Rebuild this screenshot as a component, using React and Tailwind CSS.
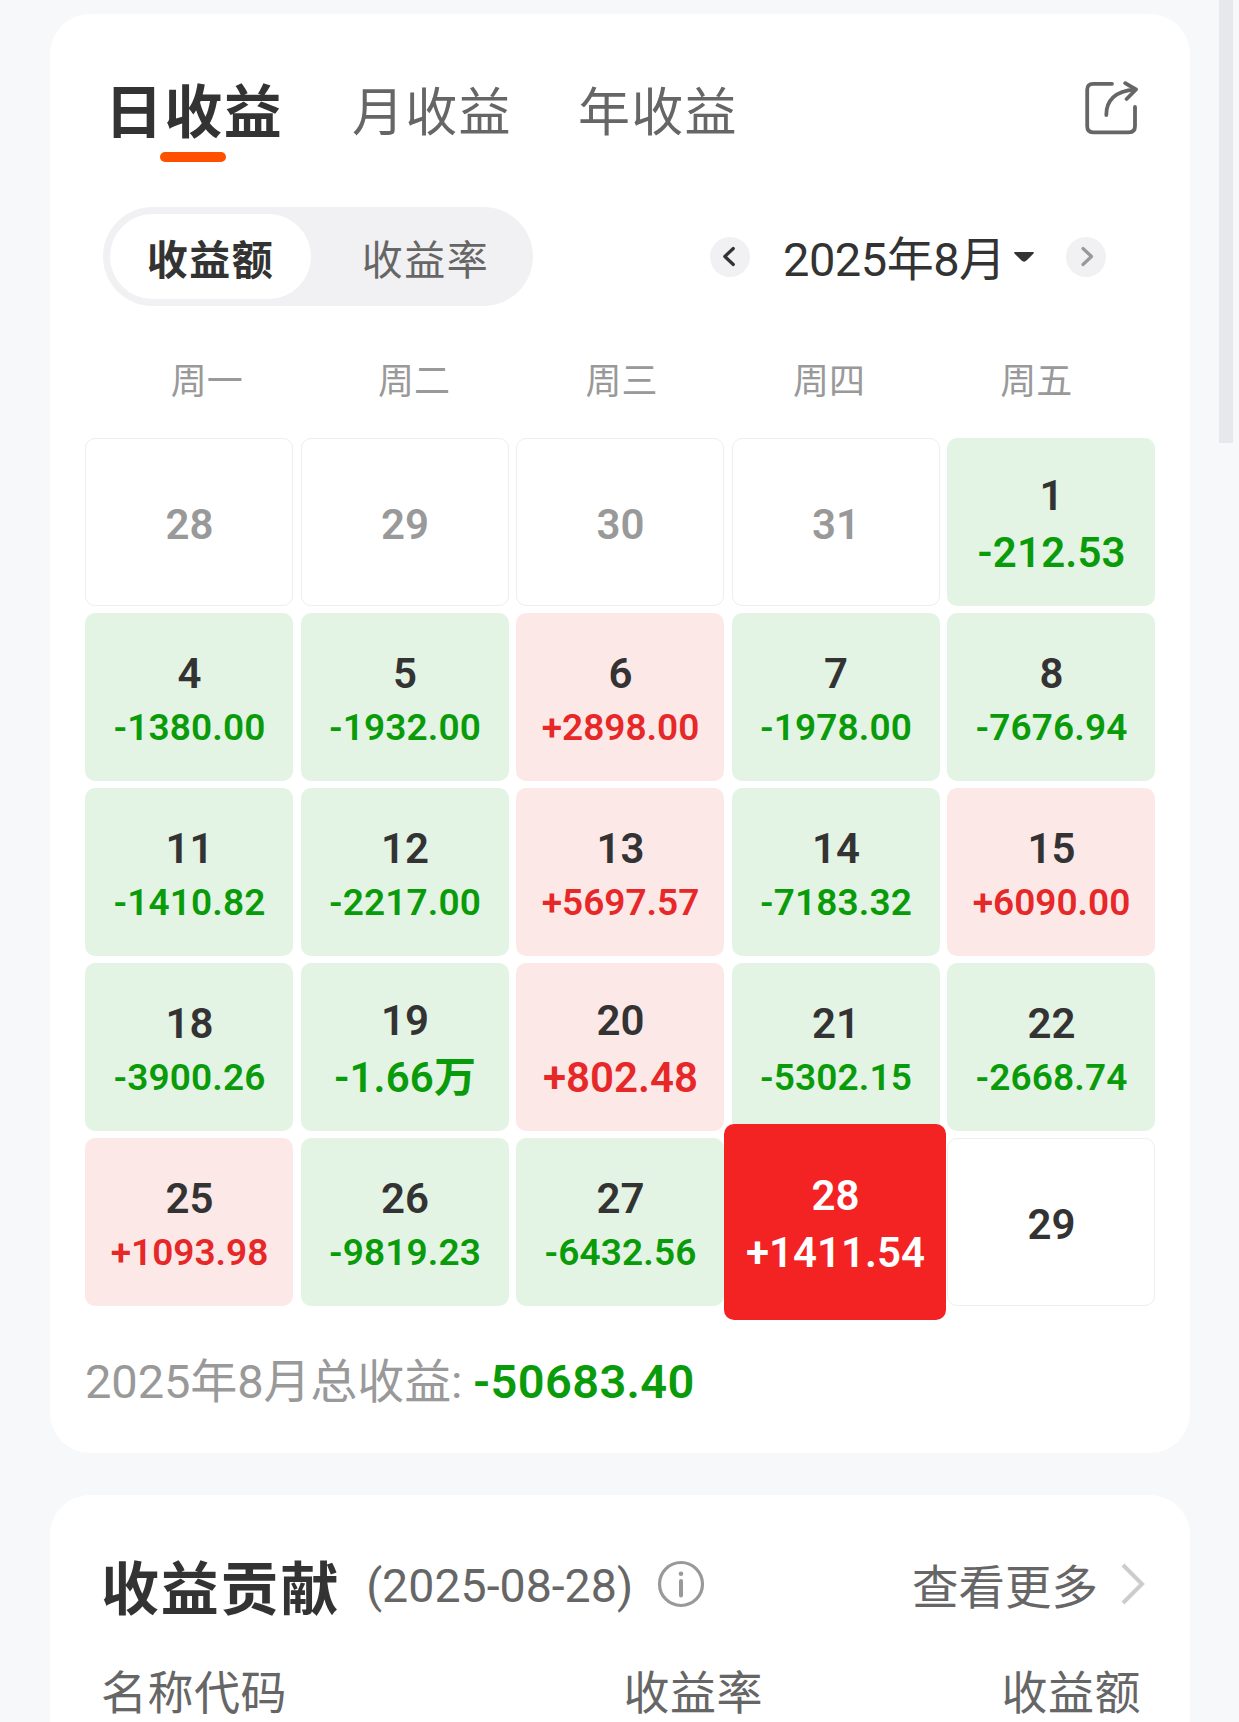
const TABS = ["月收益", "年收益"];
const WEEKDAYS = ["周一", "周二", "周三", "周四", "周五"];

const DAYS = [
  { d: 28, out: true }, { d: 29, out: true }, { d: 30, out: true }, { d: 31, out: true }, { d: 1, v: "-212.53" },
  { d: 4, v: "-1380.00" }, { d: 5, v: "-1932.00" }, { d: 6, v: "+2898.00" }, { d: 7, v: "-1978.00" }, { d: 8, v: "-7676.94" },
  { d: 11, v: "-1410.82" }, { d: 12, v: "-2217.00" }, { d: 13, v: "+5697.57" }, { d: 14, v: "-7183.32" }, { d: 15, v: "+6090.00" },
  { d: 18, v: "-3900.26" }, { d: 19, v: "-1.66万" }, { d: 20, v: "+802.48" }, { d: 21, v: "-5302.15" }, { d: 22, v: "-2668.74" },
  { d: 25, v: "+1093.98" }, { d: 26, v: "-9819.23" }, { d: 27, v: "-6432.56" }, { d: 28, v: "+1411.54", selected: true }, { d: 29 },
];

function DayCell({ day }) {
  const { d, v, out, selected } = day;
  const base = "flex h-[168px] flex-col items-center justify-center rounded-[10px] pt-1 pl-px font-semibold";
  if (!v) {
    return (
      <div className={`${base} border border-[#eeeeee] ${out ? "text-[#999999]" : "text-[#333333]"}`}>
        <span className="text-[42px] leading-[57px]">{d}</span>
      </div>
    );
  }
  if (selected) {
    return (
      <div className="z-10 -mt-[14px] -mr-[6px] -mb-[14px] -ml-[8px] flex h-[196px] flex-col items-center justify-center rounded-[10px] bg-[#f42323] pt-1 pl-0.5 font-semibold text-white">
        <span className="text-[42px] leading-[57px]">{d}</span>
        <span className="text-[42px] leading-[57px]">{v}</span>
      </div>
    );
  }
  const up = v.startsWith("+");
  const size = v.length > 7 ? "text-[37px] leading-[51px]" : "text-[42px] leading-[57px]";
  return (
    <div className={`${base} ${up ? "bg-[#fde8e8]" : "bg-[#e4f4e4]"}`}>
      <span className="text-[42px] leading-[57px] text-[#333333]">{d}</span>
      <span className={`${size} ${up ? "text-[#e62828]" : "tracking-[0.150px] text-[#0a9b0a]"}`}>{v}</span>
    </div>
  );
}

function ShareIcon() {
  return (
    <svg className="h-[54px] w-[54px]" viewBox="0 0 54 54" fill="none" stroke="#666666" strokeWidth="3.8" strokeLinecap="round" strokeLinejoin="round">
      <path d="M27 2.8H8Q2.2 2.8 2.2 8.8V45Q2.2 51.3 8 51.3H44Q50 51.3 50 45V26" />
      <path d="M21.300 34C21.100 20 30 9.600 50 8.600" />
      <path d="M40.200 2.200L51 8.500L41.600 18" />
    </svg>
  );
}

function NavButton({ dir }) {
  return (
    <div className="flex h-10 w-10 items-center justify-center rounded-full bg-[#f1f1f4]">
      <svg className="h-10 w-10" viewBox="0 0 40 40" fill="none" strokeWidth="3.200" strokeLinecap="round" strokeLinejoin="round">
        {dir === "prev" ? (
          <path d="M23.300 11.500L14.800 19.500L23.300 27.500" stroke="#333333" />
        ) : (
          <path d="M17 11.500L25.500 19.500L17 27.500" stroke="#999999" />
        )}
      </svg>
    </div>
  );
}

export default function App() {
  return (
    <div className="relative h-[1722px] w-[1239px] overflow-hidden bg-[#f7f8fa] pt-[14px] pl-[50px] font-[Roboto,'Noto_Sans_CJK_SC',sans-serif] whitespace-nowrap">
      <div className="absolute top-0 right-[6px] h-[443px] w-[14px] bg-[#e6e8ec]" />

      <section className="h-[1439px] w-[1140px] rounded-[40px] bg-white">
        <header className="flex h-[193px] items-start pt-[58px] pr-[51px] pl-[53px]">
          <div className="flex w-[180px] flex-col items-center">
            <span className="pt-0.5 pl-0.5 text-[58px] leading-[78px] font-bold tracking-[1.500px] text-[#333333]">日收益</span>
            <span className="mr-[1px] h-[10px] w-[66px] rounded-full bg-[#ff5000]" />
          </div>
          <div className="ml-[69px] flex gap-[66px] pt-0.5">
            {TABS.map((t) => (
              <span key={t} className="text-[52px] leading-[80px] tracking-[1.300px] text-[#666666]">{t}</span>
            ))}
          </div>
          <div className="mt-[9px] ml-auto"><ShareIcon /></div>
        </header>

        <div className="flex h-[99px] items-center pl-[53px]">
          <div className="flex h-[99px] w-[430px] items-center rounded-full bg-[#f1f1f4] p-[7px]">
            <div className="flex h-[85px] w-[201px] items-center justify-center rounded-full bg-white pt-[10px] text-[41px] font-bold tracking-[1.500px] text-[#333333]">收益额</div>
            <div className="flex flex-1 items-center justify-center pt-[10px] pl-[14px] text-[41px] tracking-[1.500px] text-[#666666]">收益率</div>
          </div>
          <div className="ml-[177px] flex items-center">
            <NavButton dir="prev" />
            <span className="ml-[33px] w-[222px] pt-1.5 text-[47px] leading-[60px] tracking-[-0.500px] text-[#333333]">2025年8月</span>
            <svg className="ml-[9px] h-[10px] w-5" viewBox="0 0 20 10">
              <path d="M1 0H19Q20.500 .5 19.500 1.600L12.500 8.500Q10 10.800 7.500 8.500L.5 1.600Q-.5 .5 1 0Z" fill="#333333" />
            </svg>
            <div className="ml-8"><NavButton dir="next" /></div>
          </div>
        </div>

        <div className="grid h-[132px] grid-cols-5 pt-[50px] pr-[50px] pl-[53px]">
          {WEEKDAYS.map((w) => (
            <span key={w} className="text-center text-[36px] leading-[52px] text-[#999999]">{w}</span>
          ))}
        </div>

        <div className="grid grid-cols-5 gap-x-[7.500px] gap-y-[7px] pr-[35px] pl-[35px]">
          {DAYS.map((day, i) => <DayCell key={i} day={day} />)}
        </div>

        <div className="mt-[46px] flex pl-[35px] text-[47px] leading-[60px]">
          <span className="w-[388px] tracking-[-0.100px] text-[#999999]">2025年8月总收益:</span>
          <span className="font-semibold tracking-[0.350px] text-[#0a9b0a]">-50683.40</span>
        </div>
      </section>

      <section className="mt-[42px] h-[300px] w-[1140px] rounded-t-[40px] bg-white pt-[52px] pr-[45px] pl-[51px]">
        <div className="flex h-[80px] items-center">
          <span className="pt-1.5 text-[58px] leading-[80px] font-bold tracking-[1.800px] text-[#333333]">收益贡献</span>
          <span className="-mt-0.5 ml-[26px] text-[46.500px] leading-[80px] text-[#666666]">(2025-08-28)</span>
          <svg className="-mt-1.5 ml-[24px] h-[48px] w-[48px]" viewBox="0 0 48 48" fill="none" stroke="#999999">
            <circle cx="24" cy="24" r="21.500" strokeWidth="3.200" />
            <path d="M24 21V35.500" strokeWidth="4" strokeLinecap="round" />
            <circle cx="24" cy="13.800" r="2.300" fill="#999999" stroke="none" />
          </svg>
          <span className="ml-auto pt-0.5 text-[46.500px] leading-[80px] text-[#666666]">查看更多</span>
          <svg className="-mt-1.5 mr-[-1px] ml-[22px] h-[44px] w-[26px]" viewBox="0 0 26 44" fill="none" stroke="#cccccc" strokeWidth="4">
            <path d="M3 3L22 22L3 41" />
          </svg>
        </div>
        <div className="mt-[36px] flex text-[46px] leading-[60px] tracking-[0.500px] text-[#666666]">
          <span className="w-[312px]">名称代码</span>
          <span className="w-[350px] text-right">收益率</span>
          <span className="flex-1 pr-[4px] text-right">收益额</span>
        </div>
      </section>
    </div>
  );
}
